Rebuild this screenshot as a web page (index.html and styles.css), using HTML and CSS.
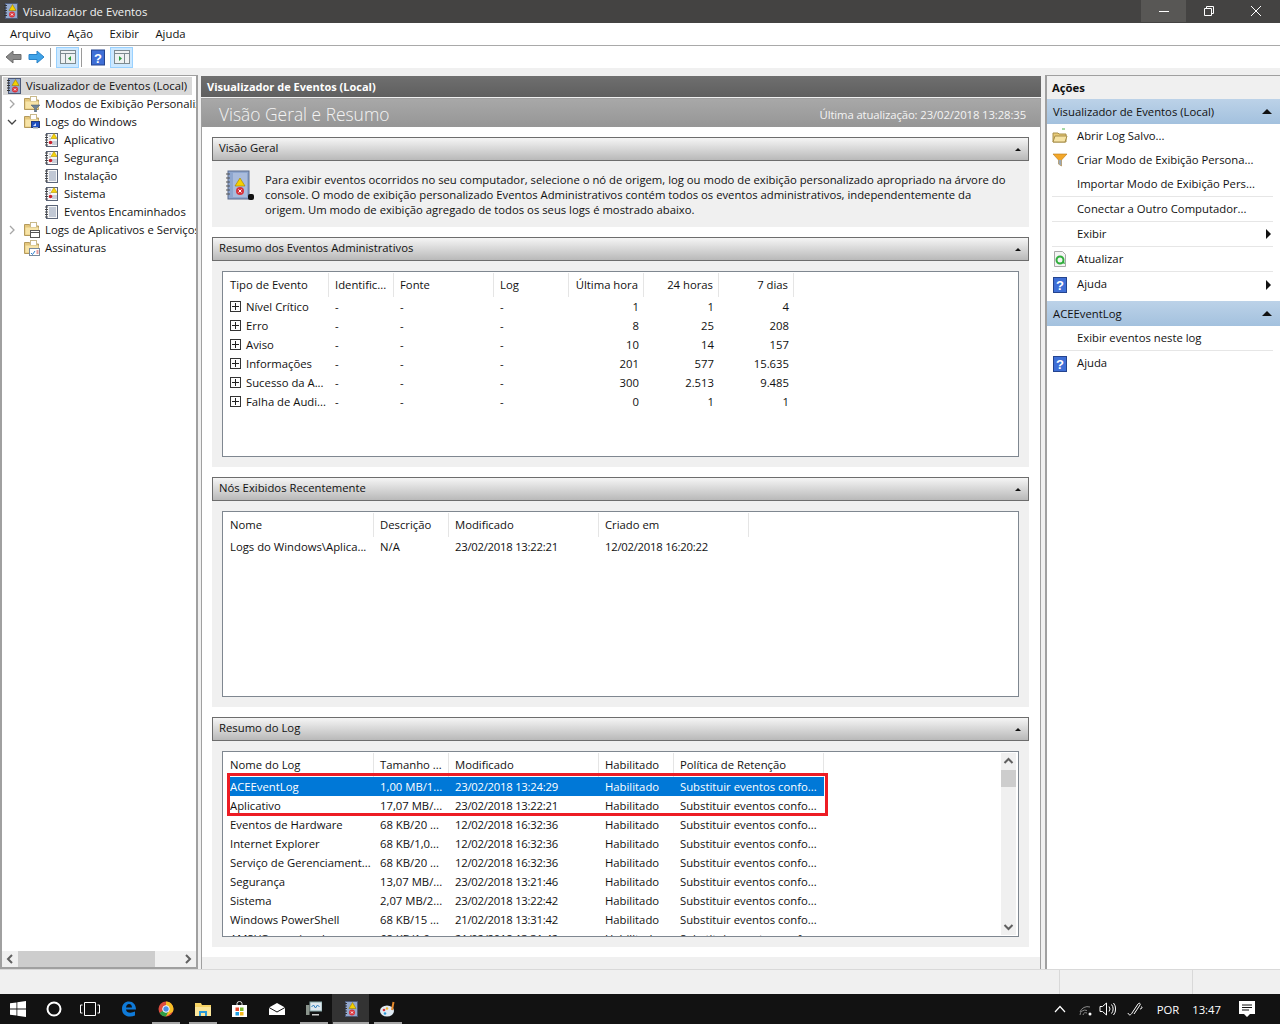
FILE: index.html
```html
<!DOCTYPE html>
<html lang="pt-BR">
<head>
    <meta charset="UTF-8">
    <meta name="viewport" content="width=device-width, initial-scale=1.0">
    <title>Visualizador de Eventos</title>
    <link rel="stylesheet" href="styles.css">
</head>
<body>
    <svg class="defs" width="0" height="0">
        <symbol id="i-ev" viewBox="0 0 16 16">
            <rect x="2.500" y=".5" width="12" height="15" fill="#93a8cc" stroke="#4d5a78"/>
            <path d="M1 2.500h3M1 5h3M1 7.500h3M1 10h3M1 12.500h3" stroke="#333"/>
            <path d="M9.500 1.500l3.500 6H6z" fill="#f5d000" stroke="#9a8000" stroke-width=".6"/>
            <circle cx="9" cy="11.500" r="3" fill="#d8343c"/>
            <path d="M8 10.500l2 2M10 10.500l-2 2" stroke="#fff"/>
        </symbol>
        <symbol id="i-log-warn" viewBox="0 0 16 16">
            <rect x="2.500" y="1.500" width="11" height="13" fill="#f6f6f6" stroke="#5a6478"/>
            <path d="M1 3h3M1 5.500h3M1 8h3M1 10.500h3M1 13h3" stroke="#444"/>
            <path d="M5 4h2M5 7h2M8 10h5M8 12h5" stroke="#9aa6bb"/>
            <path d="M10 1.500l3 5H7z" fill="#f7d40a" stroke="#b39500" stroke-width=".6"/>
            <circle cx="6.500" cy="10.500" r="1.800" fill="#c8202c"/>
        </symbol>
        <symbol id="i-log" viewBox="0 0 16 16">
            <rect x="2.500" y="1.500" width="11" height="13" fill="#f6f6f6" stroke="#5a6478"/>
            <path d="M1 3h3M1 5.500h3M1 8h3M1 10.500h3M1 13h3" stroke="#444"/>
            <path d="M5 4h7M5 6h7M5 8h7M5 10h7M5 12h7" stroke="#8c9ab3"/>
        </symbol>
        <symbol id="i-folder" viewBox="0 0 16 16">
            <path d="M.5 2.500h5l1 1.500h8v9.500H.5z" fill="#e5c77c" stroke="#b49a5c"/>
            <rect x="6.500" y=".5" width="6" height="5" fill="#fff" stroke="#c9b98a"/>
            <path d="M1.500 5.500h13v7h-13z" fill="#f7e4a8"/>
        </symbol>
        <symbol id="i-folder-filter" viewBox="0 0 16 16">
            <use href="#i-folder"/>
            <path d="M7 9h9l-3.500 3.500V16h-2v-3.500z" fill="#6f8496" stroke="#46586a" stroke-width=".5"/>
        </symbol>
        <symbol id="i-folder-screen" viewBox="0 0 16 16">
            <use href="#i-folder"/>
            <rect x="7.500" y="7.500" width="8" height="6" fill="#1f4fc0" stroke="#233a78"/>
            <path d="M9 13h5v1.500H9z" fill="#9aa6b4"/>
            <path d="M9 12l3-3v3z" fill="#cfe0ff"/>
        </symbol>
        <symbol id="i-folder-window" viewBox="0 0 16 16">
            <use href="#i-folder"/>
            <rect x="6.500" y="8.500" width="9" height="7" fill="#fff" stroke="#555"/>
            <path d="M6.500 10.500h9" stroke="#555"/>
        </symbol>
        <symbol id="i-folder-subs" viewBox="0 0 16 16">
            <use href="#i-folder"/>
            <rect x="5.500" y="8.500" width="10" height="7" fill="#fff" stroke="#7a8a9c"/>
            <path d="M7 13l1.500 1.500L11 11" fill="none" stroke="#2c7fd0"/>
            <path d="M12.500 11h2M12.500 13h2" stroke="#c8383c"/>
        </symbol>
        <symbol id="i-help" viewBox="0 0 14 16">
            <rect width="14" height="16" fill="#24448f"/>
            <rect x="1" y="1" width="12" height="14" fill="#3f6fd6"/>
            <text x="7" y="13" text-anchor="middle" font-family="Liberation Sans, sans-serif" font-size="13" font-weight="700" fill="#fff">?</text>
        </symbol>
        <symbol id="i-plus" viewBox="0 0 11 11">
            <rect x=".5" y=".5" width="10" height="10" fill="#fff" stroke="#333"/>
            <path d="M2 5.500h7M5.500 2v7" stroke="#222"/>
        </symbol>
    </svg>

    <header class="titlebar">
        <svg class="ico-16"><use href="#i-ev"/></svg>
        <span class="title-text">Visualizador de Eventos</span>
        <div class="win-btns">
            <span class="win-btn win-btn-hover"><svg width="12" height="12" viewBox="0 0 12 12"><path d="M1 6.500h10" stroke="#fff"/></svg></span>
            <span class="win-btn"><svg width="12" height="12" viewBox="0 0 12 12"><path d="M1.500 3.500h7v7h-7zM3.500 3.500v-2h7v7h-2" fill="none" stroke="#fff"/></svg></span>
            <span class="win-btn"><svg width="12" height="12" viewBox="0 0 12 12"><path d="M1 1l10 10M11 1L1 11" stroke="#fff"/></svg></span>
        </div>
    </header>

    <nav class="menubar">
        <span class="menu-item">Arquivo</span>
        <span class="menu-item">Ação</span>
        <span class="menu-item">Exibir</span>
        <span class="menu-item">Ajuda</span>
    </nav>

    <div class="toolbar">
        <svg class="tool-arrow" width="17" height="14" viewBox="0 0 17 14"><path d="M1 7l7-6v3.500h8v5H8V13z" fill="#8a8a8a" stroke="#6d6d6d"/></svg>
        <svg class="tool-arrow tool-arrow-last" width="17" height="14" viewBox="0 0 17 14"><path d="M16 7L9 1v3.500H1v5h8V13z" fill="#3fa3e8" stroke="#2a83c8"/></svg>
        <span class="tool-sep"></span>
        <span class="tool-btn"><svg width="16" height="14" viewBox="0 0 16 14"><rect x=".5" y=".5" width="15" height="13" fill="#eef1f2" stroke="#7d8a90"/><path d="M.5 3.500h15M5.500 3.500v10" stroke="#7d8a90"/><path d="M11 6v5L8 8.500z" fill="#2e9e3e"/></svg></span>
        <span class="tool-sep tool-sep-near"></span>
        <svg class="tool-help" width="14" height="17"><use href="#i-help"/></svg>
        <span class="tool-btn"><svg width="16" height="14" viewBox="0 0 16 14"><rect x=".5" y=".5" width="15" height="13" fill="#eef1f2" stroke="#7d8a90"/><path d="M.5 3.500h15M10.500 3.500v10" stroke="#7d8a90"/><path d="M5 6v5l3-2.500z" fill="#2e9e3e"/></svg></span>
    </div>

    <main class="workspace">
        <aside class="tree">
            <div class="tree-list">
                <div class="tree-row tree-root"><svg class="ico-16"><use href="#i-ev"/></svg><span>Visualizador de Eventos (Local)</span></div>
                <div class="tree-row lvl-1"><svg class="twisty" viewBox="0 0 8 10"><path d="M2 1l4 4-4 4" fill="none" stroke="#a6a6a6" stroke-width="1.300"/></svg><svg class="ico-16"><use href="#i-folder-filter"/></svg><span>Modos de Exibição Personalizados</span></div>
                <div class="tree-row lvl-1"><svg class="twisty" viewBox="0 0 10 8"><path d="M1 2l4 4 4-4" fill="none" stroke="#444" stroke-width="1.300"/></svg><svg class="ico-16"><use href="#i-folder-screen"/></svg><span>Logs do Windows</span></div>
                <div class="tree-row lvl-2"><svg class="ico-16"><use href="#i-log-warn"/></svg><span>Aplicativo</span></div>
                <div class="tree-row lvl-2"><svg class="ico-16"><use href="#i-log-warn"/></svg><span>Segurança</span></div>
                <div class="tree-row lvl-2"><svg class="ico-16"><use href="#i-log"/></svg><span>Instalação</span></div>
                <div class="tree-row lvl-2"><svg class="ico-16"><use href="#i-log-warn"/></svg><span>Sistema</span></div>
                <div class="tree-row lvl-2"><svg class="ico-16"><use href="#i-log"/></svg><span>Eventos Encaminhados</span></div>
                <div class="tree-row lvl-1"><svg class="twisty" viewBox="0 0 8 10"><path d="M2 1l4 4-4 4" fill="none" stroke="#a6a6a6" stroke-width="1.300"/></svg><svg class="ico-16"><use href="#i-folder-window"/></svg><span>Logs de Aplicativos e Serviços</span></div>
                <div class="tree-row lvl-1 no-twisty"><svg class="ico-16"><use href="#i-folder-subs"/></svg><span>Assinaturas</span></div>
            </div>
            <div class="hscroll">
                <svg width="16" height="16" viewBox="0 0 16 16"><path d="M10 4L6 8l4 4" fill="none" stroke="#606060" stroke-width="2"/></svg>
                <div class="hscroll-track"><div class="hscroll-thumb"></div></div>
                <svg width="16" height="16" viewBox="0 0 16 16"><path d="M6 4l4 4-4 4" fill="none" stroke="#606060" stroke-width="2"/></svg>
            </div>
        </aside>

        <section class="center">
            <h1 class="center-head">Visualizador de Eventos (Local)</h1>
            <div class="center-body">
                <div class="banner">
                    <span class="banner-title">Visão Geral e Resumo</span>
                    <span class="banner-date">Última atualização: 23/02/2018 13:28:35</span>
                </div>

                <div class="panels">
                    <div class="panel">
                        <div class="panel-head"><span>Visão Geral</span><i class="caret"></i></div>
                        <div class="panel-body overview">
                            <svg class="overview-ico" width="30" height="32" viewBox="0 0 30 32">
                                <rect x="3" y="1" width="21" height="28" fill="#8ea6cf" stroke="#5a6a8c"/>
                                <rect x="8" y="3" width="14" height="24" fill="#a9bbdc"/>
                                <path d="M1 4h4M1 8h4M1 12h4M1 16h4M1 20h4M1 24h4" stroke="#555"/>
                                <path d="M15 8l5 8H10z" fill="#f5d000" stroke="#a08000" stroke-width=".6"/>
                                <circle cx="15" cy="21" r="4" fill="#d8343c"/>
                                <path d="M13.500 19.500l3 3M16.500 19.500l-3 3" stroke="#fff"/>
                                <rect x="23" y="24" width="6" height="6" rx="2" fill="#111"/>
                            </svg>
                            <p class="overview-text">Para exibir eventos ocorridos no seu computador, selecione o nó de origem, log ou modo de exibição personalizado apropriado na árvore do<br>console. O modo de exibição personalizado Eventos Administrativos contém todos os eventos administrativos, independentemente da<br>origem. Um modo de exibição agregado de todos os seus logs é mostrado abaixo.</p>
                        </div>
                    </div>

                    <div class="panel">
                        <div class="panel-head"><span>Resumo dos Eventos Administrativos</span><i class="caret"></i></div>
                        <div class="panel-body">
                            <div class="frame">
                                <table class="grid grid-admin">
                                    <colgroup><col class="c105"><col class="c65"><col class="c100"><col class="c75"><col class="c75"><col class="c75"><col class="c75"></colgroup>
                                    <thead><tr><th>Tipo de Evento</th><th>Identific...</th><th>Fonte</th><th>Log</th><th class="num">Última hora</th><th class="num">24 horas</th><th class="num">7 dias</th></tr></thead>
                                    <tbody>
                                        <tr><td><svg class="plus"><use href="#i-plus"/></svg>Nível Crítico</td><td>-</td><td>-</td><td>-</td><td class="num">1</td><td class="num">1</td><td class="num">4</td></tr>
                                        <tr><td><svg class="plus"><use href="#i-plus"/></svg>Erro</td><td>-</td><td>-</td><td>-</td><td class="num">8</td><td class="num">25</td><td class="num">208</td></tr>
                                        <tr><td><svg class="plus"><use href="#i-plus"/></svg>Aviso</td><td>-</td><td>-</td><td>-</td><td class="num">10</td><td class="num">14</td><td class="num">157</td></tr>
                                        <tr><td><svg class="plus"><use href="#i-plus"/></svg>Informações</td><td>-</td><td>-</td><td>-</td><td class="num">201</td><td class="num">577</td><td class="num">15.635</td></tr>
                                        <tr><td><svg class="plus"><use href="#i-plus"/></svg>Sucesso da A...</td><td>-</td><td>-</td><td>-</td><td class="num">300</td><td class="num">2.513</td><td class="num">9.485</td></tr>
                                        <tr><td><svg class="plus"><use href="#i-plus"/></svg>Falha de Audi...</td><td>-</td><td>-</td><td>-</td><td class="num">0</td><td class="num">1</td><td class="num">1</td></tr>
                                    </tbody>
                                </table>
                            </div>
                        </div>
                    </div>

                    <div class="panel">
                        <div class="panel-head"><span>Nós Exibidos Recentemente</span><i class="caret"></i></div>
                        <div class="panel-body">
                            <div class="frame">
                                <table class="grid grid-recent">
                                    <colgroup><col class="c150"><col class="c75"><col class="c150"><col class="c150"></colgroup>
                                    <thead><tr><th>Nome</th><th>Descrição</th><th>Modificado</th><th>Criado em</th></tr></thead>
                                    <tbody>
                                        <tr><td>Logs do Windows\Aplica...</td><td>N/A</td><td class="date">23/02/2018 13:22:21</td><td class="date">12/02/2018 16:20:22</td></tr>
                                    </tbody>
                                </table>
                            </div>
                        </div>
                    </div>

                    <div class="panel">
                        <div class="panel-head"><span>Resumo do Log</span><i class="caret"></i></div>
                        <div class="panel-body">
                            <div class="frame frame-scroll">
                                <table class="grid grid-log">
                                    <colgroup><col class="c150"><col class="c75"><col class="c150"><col class="c75"><col class="c150"></colgroup>
                                    <thead><tr><th>Nome do Log</th><th>Tamanho ...</th><th>Modificado</th><th>Habilitado</th><th>Política de Retenção</th></tr></thead>
                                    <tbody>
                                        <tr class="selected"><td>ACEEventLog</td><td>1,00 MB/1...</td><td class="date">23/02/2018 13:24:29</td><td>Habilitado</td><td>Substituir eventos confo...</td></tr>
                                        <tr><td>Aplicativo</td><td>17,07 MB/...</td><td class="date">23/02/2018 13:22:21</td><td>Habilitado</td><td>Substituir eventos confo...</td></tr>
                                        <tr><td>Eventos de Hardware</td><td>68 KB/20 ...</td><td class="date">12/02/2018 16:32:36</td><td>Habilitado</td><td>Substituir eventos confo...</td></tr>
                                        <tr><td>Internet Explorer</td><td>68 KB/1,0...</td><td class="date">12/02/2018 16:32:36</td><td>Habilitado</td><td>Substituir eventos confo...</td></tr>
                                        <tr><td>Serviço de Gerenciament...</td><td>68 KB/20 ...</td><td class="date">12/02/2018 16:32:36</td><td>Habilitado</td><td>Substituir eventos confo...</td></tr>
                                        <tr><td>Segurança</td><td>13,07 MB/...</td><td class="date">23/02/2018 13:21:46</td><td>Habilitado</td><td>Substituir eventos confo...</td></tr>
                                        <tr><td>Sistema</td><td>2,07 MB/2...</td><td class="date">23/02/2018 13:22:42</td><td>Habilitado</td><td>Substituir eventos confo...</td></tr>
                                        <tr><td>Windows PowerShell</td><td>68 KB/15 ...</td><td class="date">21/02/2018 13:31:42</td><td>Habilitado</td><td>Substituir eventos confo...</td></tr>
                                        <tr><td>AMSI/Operacional</td><td>68 KB/1,0...</td><td class="date">21/02/2018 13:31:42</td><td>Habilitado</td><td>Substituir eventos confo...</td></tr>
                                    </tbody>
                                </table>
                                <div class="vscroll">
                                    <svg width="15" height="16" viewBox="0 0 15 16"><path d="M3.500 10l4-4 4 4" fill="none" stroke="#606060" stroke-width="2"/></svg>
                                    <div class="vscroll-track"><div class="vscroll-thumb"></div></div>
                                    <svg width="15" height="16" viewBox="0 0 15 16"><path d="M3.500 6l4 4 4-4" fill="none" stroke="#606060" stroke-width="2"/></svg>
                                </div>
                                <div class="mark"></div>
                            </div>
                        </div>
                    </div>
                </div>
                <div class="center-foot"></div>
            </div>
        </section>

        <aside class="actions">
            <h2 class="actions-head">Ações</h2>
            <div class="group-head"><span>Visualizador de Eventos (Local)</span><i class="caret-big"></i></div>
            <ul class="action-list">
                <li class="action h24"><svg class="ico-16" viewBox="0 0 16 16"><path d="M1 5h5l1 1h7v8H1z" fill="#e7c977" stroke="#a88f4a"/><path d="M3 8h12l-2 6H1z" fill="#f6e3a5" stroke="#a88f4a"/><path d="M10 1h3" stroke="#4ab34a"/></svg><span>Abrir Log Salvo...</span></li>
                <li class="action h24"><svg class="ico-16" viewBox="0 0 16 16"><path d="M1 2h14L9.500 8v6l-3-2V8z" fill="#f3a72a" stroke="#b87814" stroke-width=".6"/><path d="M6.500 8h3v6l-3-2z" fill="#9aa8b4"/></svg><span>Criar Modo de Exibição Persona...</span></li>
                <li class="action h25 line no-ico"><span>Importar Modo de Exibição Pers...</span></li>
                <li class="action h25 line no-ico"><span>Conectar a Outro Computador...</span></li>
                <li class="action h25 line no-ico"><span>Exibir</span><i class="tri"></i></li>
                <li class="action h25 line"><svg class="ico-16" viewBox="0 0 16 16"><path d="M2.500.500h8l3 3v12h-11z" fill="#f4f4f4" stroke="#a8a8a8"/><circle cx="8" cy="9" r="3.500" fill="none" stroke="#2fae3c" stroke-width="2"/><path d="M10 12l3 1-1-3z" fill="#2fae3c"/></svg><span>Atualizar</span></li>
                <li class="action h25"><svg class="ico-16"><use href="#i-help"/></svg><span>Ajuda</span><i class="tri"></i></li>
            </ul>
            <div class="group-head group-second"><span>ACEEventLog</span><i class="caret-big"></i></div>
            <ul class="action-list">
                <li class="action h25 line no-ico"><span>Exibir eventos neste log</span></li>
                <li class="action h25"><svg class="ico-16"><use href="#i-help"/></svg><span>Ajuda</span></li>
            </ul>
        </aside>
    </main>

    <div class="statusbar">
        <span class="status-cell status-wide"></span>
        <span class="status-cell status-mid"></span>
    </div>

    <footer class="taskbar">
        <span class="task task-start"><svg width="16" height="16" viewBox="0 0 16 16"><path d="M0 2.300l6.500-.9v6.200H0zM7.300 1.300L16 0v7.600H7.300zM0 8.400h6.500v6.200L0 13.700zM7.300 8.400H16V16l-8.700-1.300z" fill="#fff"/></svg></span>
        <span class="task task-cortana"><svg width="16" height="16" viewBox="0 0 16 16"><circle cx="8" cy="8" r="6.500" fill="none" stroke="#fff" stroke-width="2"/></svg></span>
        <span class="task task-view"><svg width="20" height="14" viewBox="0 0 20 14"><path d="M4.500.500h11v13h-11zM2.500 3H.500v8h2M17.500 3h2v8h-2" fill="none" stroke="#fff"/></svg></span>
        <span class="task"><svg width="16" height="17" viewBox="0 0 16 17"><path d="M1 8c0-5 3-7.500 7-7.500s7 3 7 8H5c.3 3.500 5 4 9 2v4c-5 2.500-13 1-13-6.500zM5 6.500h6C11 4 9.500 3 8 3S5.200 4.500 5 6.500z" fill="#0f7ad8"/></svg></span>
        <span class="task task-run"><svg width="16" height="16" viewBox="0 0 16 16"><circle cx="8" cy="8" r="7.500" fill="#dd4b3e"/><path d="M8 8L1.500 12A7.500 7.500 0 0 0 8 15.500L11 9z" fill="#2f9e44"/><path d="M8 .500A7.500 7.500 0 0 1 15 10.500L8 15.500 11.500 8H8z" fill="#f6c026"/><circle cx="8" cy="8" r="3.300" fill="#4a8fe8" stroke="#fff"/></svg></span>
        <span class="task task-run"><svg width="16" height="14" viewBox="0 0 16 14"><path d="M0 1h6l1 2h9v11H0z" fill="#f6d365"/><path d="M0 5h16v9H0z" fill="#fbe69a"/><path d="M4 9h8v5h-2v-3H6v3H4z" fill="#2b9ad8"/></svg></span>
        <span class="task"><svg width="15" height="16" viewBox="0 0 15 16"><path d="M5 4V2.500a2.500 2 0 0 1 5 0V4" fill="none" stroke="#ddd"/><rect y="4" width="15" height="12" fill="#fff"/><rect x="3.500" y="6.500" width="3.500" height="3.500" fill="#e8482c"/><rect x="8" y="6.500" width="3.500" height="3.500" fill="#7cb82f"/><rect x="3.500" y="11" width="3.500" height="3.500" fill="#1ea0e6"/><rect x="8" y="11" width="3.500" height="3.500" fill="#f6b81c"/></svg></span>
        <span class="task"><svg width="16" height="12" viewBox="0 0 16 12"><path d="M0 4.500L8 0l8 4.500V12H0z" fill="#fff"/><path d="M0 4.500L8 9l8-4.500" fill="none" stroke="#111"/></svg></span>
        <span class="task task-run"><svg width="16" height="16" viewBox="0 0 16 16"><rect x="4" y="1" width="12" height="9" fill="#dfe8ee" stroke="#8aa"/><path d="M5.500 6l2-2 2 3 2-3 2 2" fill="none" stroke="#2b7fc0"/><rect y="4" width="3.500" height="10" fill="#8a948c"/><path d="M6 13h7v1.500H6z" fill="#ccc"/></svg></span>
        <span class="task task-run task-active"><svg width="16" height="16"><use href="#i-ev"/></svg></span>
        <span class="task task-run"><svg width="16" height="16" viewBox="0 0 16 16"><ellipse cx="7" cy="10" rx="7" ry="5.500" fill="#dfeaf3"/><circle cx="4" cy="9" r="1.300" fill="#d8343c"/><circle cx="7" cy="7.500" r="1.300" fill="#f2b632"/><circle cx="5" cy="12.500" r="1.300" fill="#2b9ad8"/><path d="M12 9l1.500-8" stroke="#e88a2c" stroke-width="2"/></svg></span>

        <div class="tray">
            <svg width="12" height="8" viewBox="0 0 12 8"><path d="M1 7l5-5.500L11 7" fill="none" stroke="#fff" stroke-width="1.200"/></svg>
            <svg class="tray-wifi" width="13" height="13" viewBox="0 0 13 13"><path d="M1 9a8 8 0 0 1 10-5M1 12a5 5 0 0 1 7-4.500M4 12a3 3 0 0 1 4-2" fill="none" stroke="#8a8a8a"/><circle cx="11" cy="11" r="1.500" fill="#fff"/></svg>
            <svg class="tray-vol" width="17" height="14" viewBox="0 0 17 14"><path d="M1 4.500h2.500L7.500 1v12L3.500 9.500H1z" fill="none" stroke="#fff"/><path d="M10 4.500a4 4 0 0 1 0 5M12.500 2.500a7 7 0 0 1 0 9M14.500 1a9.500 9.500 0 0 1 0 12" fill="none" stroke="#fff"/></svg>
            <svg class="tray-pen" width="16" height="16" viewBox="0 0 16 16"><path d="M1 12c1 3 3 2 4 0l6-9c1-1.500 3-.5 2 1l-6 9M14 6c2-.5 1 2-1 2" fill="none" stroke="#fff"/></svg>
            <span class="tray-lang">POR</span>
            <span class="tray-clock">13:47</span>
            <svg class="tray-note" width="16" height="16" viewBox="0 0 16 16"><path d="M0 0h16v13h-5l-3 3-3-3H0z" fill="#fff"/><path d="M3 4h10M3 6.500h10M3 9h7" stroke="#111"/></svg>
        </div>
    </footer>
</body>
</html>
```

FILE: styles.css
```css
* {
    box-sizing: border-box;
}
html, body {
    margin: 0;
    padding: 0;
}
body {
    width: 1280px;
    height: 1024px;
    overflow: hidden;
    font-family: "Open Sans", "Liberation Sans", sans-serif;
    font-size: 11.3px;
    color: #111;
    background-color: #f0f0f0;
    display: flex;
    flex-direction: column;
}
.defs {
    position: absolute;
}
.ico-16 {
    width: 16px;
    height: 16px;
    flex: none;
}

/* barra de titulo */
.titlebar {
    height: 23px;
    background-color: #444342;
    color: #f2f2f2;
    display: flex;
    align-items: center;
    padding-left: 3px;
}
.title-text {
    margin-left: 4px;
}
.win-btns {
    margin-left: auto;
    display: flex;
    height: 22px;
}
.win-btn {
    width: 46px;
    display: flex;
    align-items: center;
    justify-content: center;
}
.win-btn:first-child {
    width: 45px;
}
.win-btn:last-child {
    width: 48px;
}
.win-btn-hover {
    background-color: #585755;
}

/* menu e ferramentas */
.menubar {
    height: 23px;
    background-color: #fff;
    border-bottom: 1px solid #a9a9a9;
    display: flex;
    align-items: center;
    padding-left: 10px;
}
.menu-item {
    margin-right: 16.500px;
}
.toolbar {
    height: 23px;
    padding: 1px 0 0 5px;
    background-color: #fff;
    display: flex;
    align-items: center;
}
.tool-arrow {
    margin-right: 6px;
}
.tool-arrow-last {
    margin-right: 5px;
}
.tool-sep {
    width: 1px;
    height: 19px;
    background-color: #9a9a9a;
    margin: 0 5px 0 0;
}
.tool-sep-near {
    margin-left: 2px;
    margin-right: 9px;
}
.tool-btn {
    width: 23px;
    height: 21px;
    background-color: #cce8ff;
    border: 1px solid #99d1ff;
    display: flex;
    align-items: center;
    justify-content: center;
}
.tool-help {
    margin-right: 5px;
}

/* area de trabalho */
.workspace {
    margin-top: 7px;
    height: 894px;
    display: flex;
}

/* arvore esquerda */
.tree {
    width: 198px;
    background-color: #fff;
    border: 1px solid #a0a0a0;
    border-width: 1px 2px 2px 2px;
    display: flex;
    flex-direction: column;
    overflow: hidden;
}
.tree-list {
    flex: 1;
    padding-top: 1px;
    overflow: hidden;
}
.tree-row {
    height: 18px;
    display: flex;
    align-items: center;
    white-space: nowrap;
    overflow: hidden;
}
.tree-row span {
    margin-left: 4px;
    margin-bottom: 2px;
}
.tree-root {
    background-color: #d9d9d9;
    width: 189px;
    margin-left: 1px;
    padding-left: 3px;
}
.tree-root span {
    margin-left: 4px;
}
.lvl-1 {
    padding-left: 5px;
}
.lvl-1 span {
    margin-left: 5px;
}
.no-twisty {
    padding-left: 22px;
}
.lvl-2 {
    padding-left: 42px;
}
.twisty {
    width: 10px;
    height: 10px;
    margin-right: 7px;
    flex: none;
}
.hscroll {
    height: 16px;
    background-color: #f0f0f0;
    display: flex;
    align-items: center;
}
.hscroll-track {
    flex: 1;
}
.hscroll-thumb {
    width: 137px;
    height: 16px;
    background-color: #cdcdcd;
}

/* painel central */
.center {
    width: 840px;
    margin-left: 3px;
    display: flex;
    flex-direction: column;
}
.center-head {
    height: 22px;
    margin: 1px 0 0;
    padding-left: 6px;
    font-size: 11px;
    font-weight: 700;
    line-height: 21px;
    color: #fff;
    background: linear-gradient(#6f6f6f, #5f5f5f);
}
.center-body {
    flex: 1;
    margin-top: 1px;
    border-top: 1px solid #a0a0a0;
    border-left: 1px solid #a0a0a0;
    border-right: 1px solid #a0a0a0;
    background-color: #fff;
    display: flex;
    flex-direction: column;
}
.banner {
    height: 28px;
    display: flex;
    align-items: center;
    justify-content: space-between;
    padding: 2px 14px 0 17px;
    color: #f4f4f4;
    background: linear-gradient(#a8a8a8, #969696);
}
.banner-title {
    font-size: 17.400px;
    font-weight: 300;
}
.banner-date {
    letter-spacing: -0.100px;
}
.panels {
    flex: 1;
    padding: 10px 11px 0 10px;
    display: flex;
    flex-direction: column;
    gap: 10px;
}
.panel-head {
    height: 24px;
    padding: 0 7px 3px 6px;
    border: 1px solid #6d6d6d;
    background: linear-gradient(#f5f5f5, #b9b9b9);
    display: flex;
    align-items: center;
    justify-content: space-between;
}
.caret {
    width: 0;
    height: 0;
    margin-top: 3px;
    border-left: 3px solid transparent;
    border-right: 3px solid transparent;
    border-bottom: 3px solid #111;
}
.panel-body {
    height: 206px;
    background-color: #f0f0f0;
    padding: 10px;
}
.overview {
    height: 66px;
    padding: 9px 0 0 13px;
    display: flex;
    gap: 10px;
}
.overview-ico {
    flex: none;
}
.overview-text {
    margin: 2px 0 0;
    line-height: 15px;
    white-space: nowrap;
    letter-spacing: -0.010px;
}
.center-foot {
    height: 12px;
    margin-top: 10px;
    background-color: #f0f0f0;
}

/* tabelas */
.frame {
    position: relative;
    height: 186px;
    padding: 1px;
    background-color: #fff;
    border: 1px solid #7f8790;
    overflow: hidden;
}
.frame-scroll {
    display: flex;
    align-items: flex-start;
}
.grid {
    border-collapse: separate;
    border-spacing: 0;
    table-layout: fixed;
    flex: none;
}
.grid-admin {
    width: 570px;
}
.grid-recent {
    width: 525px;
}
.grid-log {
    width: 600px;
}
.grid th,
.grid td {
    height: 19px;
    padding: 0 6px;
    font-weight: 400;
    text-align: left;
    white-space: nowrap;
    overflow: hidden;
}
.grid th {
    height: 24px;
    padding-bottom: 2px;
    border-right: 1px solid #e5e5e5;
}
.grid .num {
    padding-right: 5px;
    text-align: right;
}
.grid .date {
    letter-spacing: -0.250px;
}
.c65 { width: 65px; }
.c75 { width: 75px; }
.c100 { width: 100px; }
.c105 { width: 105px; }
.c150 { width: 150px; }
.plus {
    width: 11px;
    height: 11px;
    margin-right: 5px;
    vertical-align: -1px;
}
.selected td {
    background-color: #0078d7;
    color: #fff;
}
.selected td:first-child {
    border-left: 5px solid #fff;
    padding-left: 1px;
}
.mark {
    position: absolute;
    left: 4px;
    top: 21px;
    width: 601px;
    height: 43px;
    border: 3px solid #ed1c24;
}
.vscroll {
    width: 15px;
    height: 182px;
    margin-left: auto;
    margin-right: 1px;
    background-color: #f0f0f0;
    display: flex;
    flex-direction: column;
    justify-content: space-between;
}
.vscroll-track {
    flex: 1;
}
.vscroll-thumb {
    height: 17px;
    margin-top: 1px;
    background-color: #cdcdcd;
}

/* painel de acoes */
.actions {
    width: 235px;
    margin-left: 4px;
    background-color: #fff;
    border-left: 2px solid #a0a0a0;
    border-top: 1px solid #a0a0a0;
}
.actions-head {
    height: 23px;
    margin: 0;
    padding-left: 5px;
    font-size: 11.3px;
    font-weight: 700;
    line-height: 23px;
    background-color: #f0f0f0;
}
.group-head {
    height: 25px;
    padding: 0 8px 0 6px;
    background: linear-gradient(#bcd2e8, #a3c1de);
    display: flex;
    align-items: center;
    justify-content: space-between;
}
.group-second {
    margin-top: 4px;
}
.caret-big {
    width: 0;
    height: 0;
    border-left: 5px solid transparent;
    border-right: 5px solid transparent;
    border-bottom: 5px solid #111;
}
.action-list {
    list-style: none;
    margin: 0;
    padding: 0;
}
.action {
    margin: 0 7px 0 5px;
    padding-right: 2px;
    display: flex;
    align-items: center;
}
.action span {
    margin: 0 0 2px 9px;
    white-space: nowrap;
}
.no-ico span {
    margin-left: 25px;
}
.h24 {
    height: 24px;
}
.h25 {
    height: 25px;
}
.line {
    border-bottom: 1px solid #e6e6e6;
}
.tri {
    margin-left: auto;
    width: 0;
    height: 0;
    border-top: 5px solid transparent;
    border-bottom: 5px solid transparent;
    border-left: 5px solid #111;
}

/* barra de status */
.statusbar {
    height: 25px;
    border-top: 1px solid #d9d9d9;
    display: flex;
    padding-left: 1059px;
}
.status-cell {
    border-left: 1px solid #d9d9d9;
}
.status-wide {
    width: 133px;
}
.status-mid {
    width: 88px;
}

/* barra de tarefas */
.taskbar {
    height: 30px;
    background-color: #121212;
    color: #fff;
    display: flex;
    align-items: center;
}
.task {
    width: 37px;
    height: 30px;
    display: flex;
    align-items: center;
    justify-content: center;
}
.task-start {
    width: 36px;
}
.task-cortana svg {
    margin-right: 2px;
}
.task-view svg {
    margin-right: 4px;
}
.task-run {
    background: linear-gradient(#a6a6a6, #a6a6a6) center bottom / 28px 2px no-repeat;
}
.task-active {
    background: linear-gradient(#a6a6a6, #a6a6a6) center bottom / 36px 2px no-repeat #333;
}
.tray {
    margin-left: auto;
    display: flex;
    align-items: center;
    padding-right: 25px;
    font-size: 11.3px;
}
.tray-wifi {
    margin-left: 13px;
}
.tray-vol {
    margin-left: 7px;
}
.tray-pen {
    margin-left: 11px;
}
.tray-lang {
    margin-left: 14px;
}
.tray-clock {
    margin-left: 13px;
}
.tray-note {
    margin-left: 18px;
}
```
